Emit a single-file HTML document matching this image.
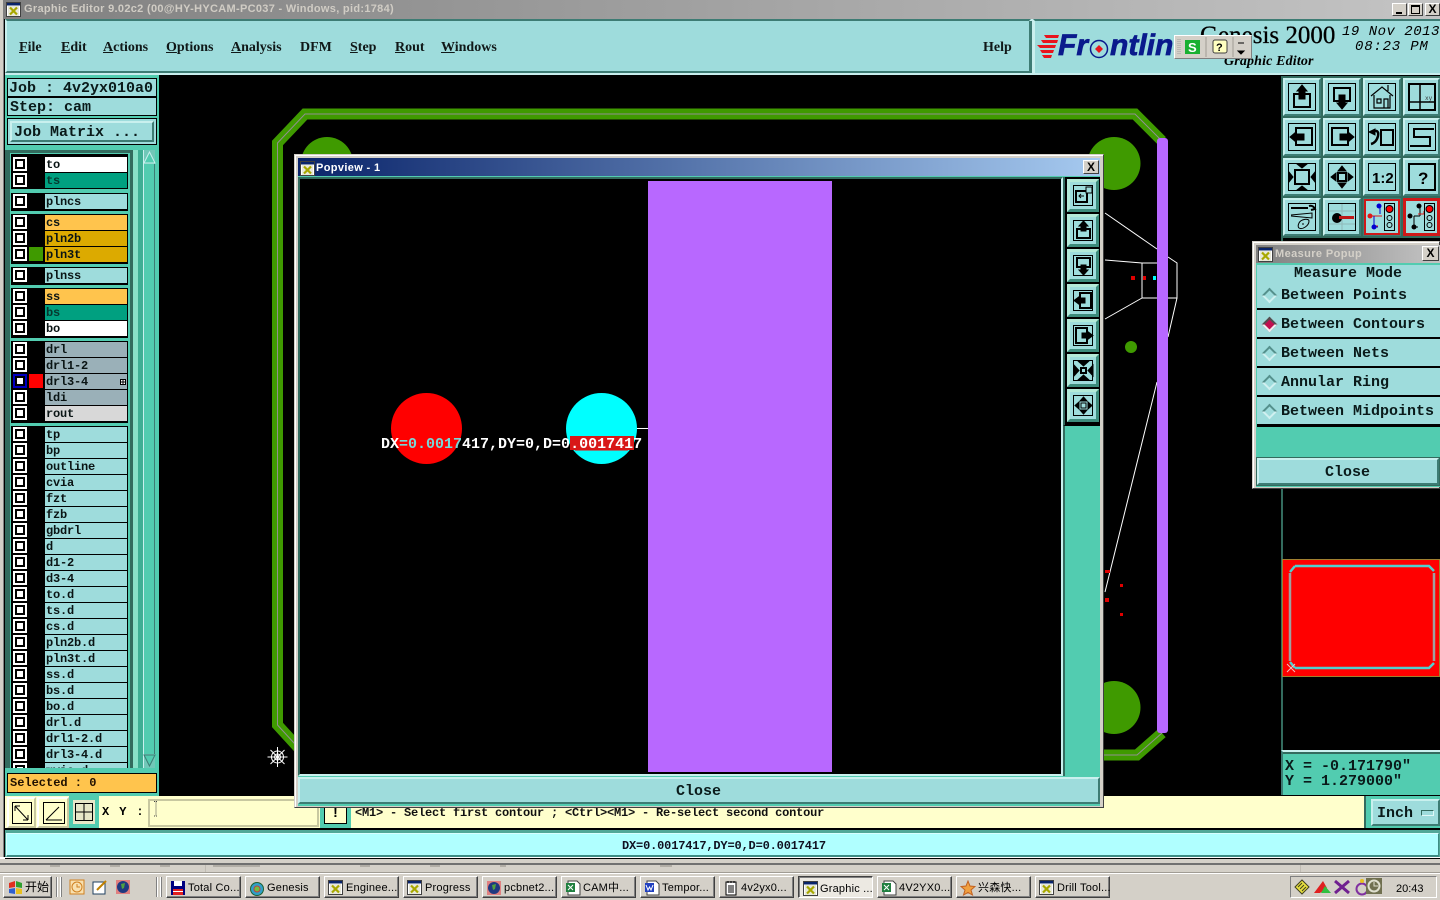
<!DOCTYPE html>
<html><head><meta charset="utf-8"><title>Graphic Editor</title>
<style>
html,body{margin:0;padding:0;width:1440px;height:900px;overflow:hidden;background:#000}
.a{position:absolute;box-sizing:border-box}
.t{position:absolute;white-space:nowrap}
.m{font:bold 15px/18px "Liberation Mono",monospace;color:#0a1a1a}
.s{font:bold 14px/22px "Liberation Serif",serif;color:#101818}
.w{font:11px/14px "Liberation Sans","Noto Sans CJK SC",sans-serif;color:#000}
.g{position:absolute;left:11px;width:117px;background:#000}
.c{position:absolute;left:13px;width:14px;height:14px;background:#000;border:2px solid #fff;box-sizing:border-box}
.c:after{content:"";position:absolute;left:2px;top:2px;width:6px;height:6px;background:#fff}
.l{position:absolute;left:45px;width:82px;height:15px;background:#9edcdc;font:bold 12px/17px "Liberation Mono",monospace;letter-spacing:-.2px;color:#0a1414;padding-left:1px;box-sizing:border-box;white-space:nowrap;overflow:hidden}
.b{position:absolute;box-sizing:border-box;background:#9edcdc;border:2px solid;border-color:#c9f0ee #3d7c74 #3d7c74 #c9f0ee}
.b svg,.p svg{position:absolute;left:0;top:0}
.p{position:absolute;box-sizing:border-box;left:3px;width:32px;height:33px;background:#9edcdc;border:3px solid;border-color:#b4ead8 #3d8c7c #3d8c7c #b4ead8;outline:1px solid #000}
.k{position:absolute;box-sizing:border-box;top:876px;height:22px;width:75px;background:#d4d0c8;border:1px solid;border-color:#fff #404040 #404040 #fff;box-shadow:inset -1px -1px 0 #808080}
.k svg{position:absolute;left:3px;top:3px}
.k span{position:absolute;left:21px;top:4px;font:11px/14px "Liberation Sans","Noto Sans CJK SC",sans-serif;letter-spacing:.2px;color:#000;white-space:nowrap}
.r{position:absolute;left:1257px;width:183px;height:27px;background:#9edcdc}
.d{position:absolute;left:7px;top:9px;width:11px;height:11px;transform:rotate(45deg);background:#9edcdc;border:2px solid;border-color:#55908c #d0f0f0 #d0f0f0 #55908c;box-sizing:border-box}
.r span{position:absolute;left:24px;top:6px;font:bold 15px/18px "Liberation Mono",monospace;color:#0a1a1a;white-space:nowrap}
</style></head>
<body>
<svg width="0" height="0" style="position:absolute"><defs>
<symbol id="xi" viewBox="0 0 15 15"><rect x=".5" y=".5" width="14" height="14" fill="#fff" stroke="#404040"/><rect x="1" y="1" width="13" height="2.5" fill="#0a246a"/><rect x="2" y="4" width="11" height="10" fill="#e8e8d8"/><path d="M4 5.5l7 7M11 5.5l-7 7" stroke="#a8a800" stroke-width="2.2"/></symbol>
</defs></svg>

<!-- base canvas -->
<div class="a" style="left:0;top:0;width:1440px;height:900px;background:#000"></div>
<svg class="a" style="left:0;top:0" width="1440" height="900">
<circle cx="327" cy="163" r="26" fill="#3f9a00"/><circle cx="1114" cy="163.500" r="26.500" fill="#3f9a00"/><circle cx="1114" cy="707.500" r="26.500" fill="#3f9a00"/><circle cx="1131" cy="347" r="6" fill="#3f9a00"/>
<path d="M1162 141L1135 114H305L277.500 143V725L305 755H1137L1162 733" fill="none" stroke="#3f9a00" stroke-width="11"/>
<path d="M1162 141L1135 114H305L277.500 143V725L305 755H1137L1162 733" fill="none" stroke="#909090" stroke-width="1"/>
<g fill="none" stroke="#fff" stroke-width="1"><path d="M1105 213L1157 249M1168 257L1177 263V298H1142V263H1168M1105 260L1142 263M1105 319L1142 298M1177 298L1168 337M1157 382L1105 592"/></g>
<rect x="1157" y="138" width="11" height="595" rx="3" fill="#b868ff"/>
<g fill="#e00000"><rect x="1131" y="276" width="4" height="4"/><rect x="1143" y="276" width="3" height="4"/><rect x="1105" y="570" width="5" height="3"/><rect x="1120" y="584" width="3" height="3"/><rect x="1105" y="598" width="4" height="4"/><rect x="1120" y="613" width="3" height="3"/></g>
<rect x="1153" y="276" width="3" height="4" fill="#0ff"/>
<g stroke="#fff" stroke-width="1" fill="none"><circle cx="277.500" cy="757" r="6"/><circle cx="277.500" cy="757" r="3"/><path d="M277.500 747V767M267.500 757H287.500M270.500 750L284.500 764M284.500 750L270.500 764"/></g>
</svg>

<!-- title bar -->
<div class="a" style="left:0;top:0;width:1440px;height:19px;background:linear-gradient(90deg,#808080,#c4c4c4)"></div>
<svg class="a" style="left:6px;top:2px" width="15" height="15"><use href="#xi"/></svg>
<div class="t" style="left:24px;top:2px;font:bold 11px/14px 'Liberation Sans',sans-serif;letter-spacing:.31px;color:#d0ccc4">Graphic Editor 9.02c2 (00@HY-HYCAM-PC037 - Windows, pid:1784)</div>
<div class="a" style="left:1392px;top:3px;width:15px;height:13px;background:#d4d0c8;border:1px solid;border-color:#fff #404040 #404040 #fff"><div class="a" style="left:3px;top:8px;width:6px;height:2px;background:#000"></div></div>
<div class="a" style="left:1408px;top:3px;width:15px;height:13px;background:#d4d0c8;border:1px solid;border-color:#fff #404040 #404040 #fff"><div class="a" style="left:2px;top:1px;width:9px;height:9px;border:1px solid #000;border-top-width:2px"></div></div>
<div class="a" style="left:1425px;top:3px;width:15px;height:13px;background:#d4d0c8;border:1px solid;border-color:#fff #404040 #404040 #fff;font:bold 12px/11px 'Liberation Sans',sans-serif;text-align:center">X</div>
<div class="a" style="left:0;top:0;width:4px;height:873px;background:#d4d0c8;border-right:1px solid #808080;z-index:0"></div>

<!-- menu bar -->
<div class="a" style="left:5px;top:19px;width:1435px;height:56px;background:#c8eeee"></div>
<div class="a" style="left:5px;top:19px;width:1026px;height:54px;background:#9edcdc;border:2px solid;border-color:#3d7c74 #c9f0ee #3d7c74 #c9f0ee"></div>
<div class="a" style="left:1033px;top:19px;width:407px;height:54px;background:#9edcdc;border-top:2px solid #3d7c74;border-left:2px solid #c9f0ee"></div>
<div class="a" style="left:1029px;top:21px;width:3px;height:52px;background:#3d7c74"></div>
<div class="t s" style="left:19px;top:37px"><u>F</u>ile</div>
<div class="t s" style="left:61px;top:37px"><u>E</u>dit</div>
<div class="t s" style="left:103px;top:37px"><u>A</u>ctions</div>
<div class="t s" style="left:166px;top:37px"><u>O</u>ptions</div>
<div class="t s" style="left:231px;top:37px"><u>A</u>nalysis</div>
<div class="t s" style="left:300px;top:37px">DFM</div>
<div class="t s" style="left:350px;top:37px"><u>S</u>tep</div>
<div class="t s" style="left:395px;top:37px"><u>R</u>out</div>
<div class="t s" style="left:441px;top:37px"><u>W</u>indows</div>
<div class="t s" style="left:983px;top:37px">Help</div>
<svg class="a" style="left:1037px;top:34px" width="72" height="26"><g fill="#e8141c"><path d="M7 1H22L21 4H9z"/><path d="M4 6H21L20 9H6z"/><path d="M0 11H19L18 14H3z"/><path d="M3 16H17L16 19H5z"/><path d="M5 21H15L14 24H7z"/></g><circle cx="62" cy="15" r="8.500" fill="none" stroke="#0a1a8c" stroke-width="1.500"/><path d="M62 11L66 15L62 19L58 15z" fill="#e8141c"/></svg>
<div class="t" style="left:1058px;top:29px;font:italic bold 30px/34px 'Liberation Sans',sans-serif;color:#0a1a8c;-webkit-text-stroke:.7px #0a1a8c">Fr</div>
<div class="t" style="left:1110px;top:29px;font:italic bold 30px/34px 'Liberation Sans',sans-serif;color:#0a1a8c;-webkit-text-stroke:.7px #0a1a8c">ntlin</div>
<div class="t" style="left:1200px;top:21px;font:25px/30px 'Liberation Serif',serif;color:#000;-webkit-text-stroke:.3px #000">Genesis 2000</div>
<div class="t" style="left:1224px;top:54px;font:italic bold 14px/16px 'Liberation Serif',serif;letter-spacing:.15px;color:#000">Graphic Editor</div>
<div class="t" style="left:1342px;top:24px;font:italic 14px/16px 'Liberation Mono',monospace;letter-spacing:.5px;color:#000">19 Nov 2013</div>
<div class="t" style="left:1355px;top:39px;font:italic 14px/16px 'Liberation Mono',monospace;letter-spacing:.8px;color:#000">08:23 PM</div>
<!-- floating ime bar -->
<div class="a" style="left:1174px;top:35px;width:78px;height:24px;background:#d4d0c8;border:1px solid;border-color:#fff #808080 #808080 #fff"></div>
<svg class="a" style="left:1175px;top:36px" width="76" height="22"><path d="M3 3V19M5 3V19" stroke="#a0a0a0" stroke-dasharray="1 1"/><rect x="10" y="4" width="15" height="14" fill="#18b030"/><text x="13" y="16" font-family="Liberation Sans" font-weight="bold" font-size="13" fill="#fff">S</text><path d="M31 1V21M58 1V21" stroke="#a09c94"/><rect x="38" y="4" width="14" height="13" rx="2" fill="#ffffc0" stroke="#404040"/><text x="41" y="15" font-family="Liberation Sans" font-weight="bold" font-size="11" fill="#000">?</text><path d="M63 7H69M63 15H69L66 18z" stroke="#000" fill="#000"/></svg>

<!-- left panel -->
<div class="a" style="left:5px;top:75px;width:154px;height:721px;background:#52ccb0"></div>
<div class="a" style="left:7px;top:78px;width:150px;height:19px;background:#9edcdc;border:1px solid #000"></div>
<div class="a" style="left:7px;top:97px;width:150px;height:19px;background:#9edcdc;border:1px solid #000"></div>
<div class="t m" style="left:9px;top:80px">Job : 4v2yx010a0</div>
<div class="t m" style="left:10px;top:99px">Step: cam</div>
<div class="a" style="left:7px;top:118px;width:150px;height:27px;background:#9edcdc;border:1px solid #000;outline:0"></div>
<div class="a" style="left:10px;top:121px;width:144px;height:21px;background:#9edcdc;border:2px solid;border-color:#c9f0ee #3d7c74 #3d7c74 #c9f0ee"></div>
<div class="t m" style="left:14px;top:124px">Job Matrix ...</div>

<div class="a" style="left:5px;top:150px;width:125px;height:618px;background:#52ccb0;border-left:5px solid #336b5e;border-top:3px solid #336b5e"></div>
<div class="a" style="left:130px;top:150px;width:8px;height:618px;background:#52ccb0;border-left:3px solid #336b5e"></div>
<div class="a" style="left:133px;top:150px;width:5px;height:618px;background:#8ae0c8"></div>
<div class="a" style="left:138px;top:150px;width:5px;height:618px;background:#3fae94"></div>
<div class="a" style="left:143px;top:150px;width:12px;height:618px;background:#52ccb0;border-left:1px solid #c9f0ee;border-right:1px solid #3d7c74"></div>
<div class="a" style="left:155px;top:150px;width:4px;height:618px;background:#52ccb0"></div>
<svg class="a" style="left:143px;top:150px" width="13" height="618"><rect x="1" y="0" width="11" height="14" fill="#70c8b8"/><rect x="1" y="604" width="11" height="14" fill="#70c8b8"/><path d="M6.500 2L12 13H1z" fill="#52ccb0" stroke="#c9f0ee"/><path d="M6.500 616L12 605H1z" fill="#52ccb0" stroke="#3d7c74"/></svg>

<div class="g" style="top:154px;height:35px"></div>
<div class="g" style="top:193px;height:18px"></div>
<div class="g" style="top:214px;height:50px"></div>
<div class="g" style="top:267px;height:18px"></div>
<div class="g" style="top:288px;height:50px"></div>
<div class="g" style="top:341px;height:82px"></div>
<div class="g" style="top:426px;height:342px"></div>

<div class="c" style="top:157px"></div><div class="l" style="top:157px;background:#fff">to</div>
<div class="c" style="top:173px"></div><div class="l" style="top:173px;background:#00a080;color:#06382e">ts</div>
<div class="c" style="top:194px"></div><div class="l" style="top:194px">plncs</div>
<div class="c" style="top:215px"></div><div class="l" style="top:215px;background:#ffc44d">cs</div>
<div class="c" style="top:231px"></div><div class="l" style="top:231px;background:#dcaa00">pln2b</div>
<div class="c" style="top:247px"></div><div class="a" style="left:29px;top:247px;width:14px;height:14px;background:#3f9a00"></div><div class="l" style="top:247px;background:#dcaa00">pln3t</div>
<div class="c" style="top:268px"></div><div class="l" style="top:268px">plnss</div>
<div class="c" style="top:289px"></div><div class="l" style="top:289px;background:#ffc44d">ss</div>
<div class="c" style="top:305px"></div><div class="l" style="top:305px;background:#00a080;color:#06382e">bs</div>
<div class="c" style="top:321px"></div><div class="l" style="top:321px;background:#fff">bo</div>
<div class="c" style="top:342px"></div><div class="l" style="top:342px;background:#9ab0b8">drl</div>
<div class="c" style="top:358px"></div><div class="l" style="top:358px;background:#9ab0b8">drl1-2</div>
<div class="c" style="top:374px;border-color:#0000c0"></div><div class="a" style="left:29px;top:374px;width:14px;height:14px;background:#f00"></div><div class="l" style="top:374px;background:#9ab0b8">drl3-4</div>
<svg class="a" style="left:120px;top:379px" width="6" height="6"><rect x=".5" y=".5" width="5" height="5" fill="#fff" stroke="#000"/><path d="M3 .5V5.500M.5 3H5.500" stroke="#000"/></svg>
<div class="c" style="top:390px"></div><div class="l" style="top:390px;background:#9ab0b8">ldi</div>
<div class="c" style="top:406px"></div><div class="l" style="top:406px;background:#d8d8d8">rout</div>
<div class="c" style="top:427px"></div><div class="l" style="top:427px">tp</div>
<div class="c" style="top:443px"></div><div class="l" style="top:443px">bp</div>
<div class="c" style="top:459px"></div><div class="l" style="top:459px">outline</div>
<div class="c" style="top:475px"></div><div class="l" style="top:475px">cvia</div>
<div class="c" style="top:491px"></div><div class="l" style="top:491px">fzt</div>
<div class="c" style="top:507px"></div><div class="l" style="top:507px">fzb</div>
<div class="c" style="top:523px"></div><div class="l" style="top:523px">gbdrl</div>
<div class="c" style="top:539px"></div><div class="l" style="top:539px">d</div>
<div class="c" style="top:555px"></div><div class="l" style="top:555px">d1-2</div>
<div class="c" style="top:571px"></div><div class="l" style="top:571px">d3-4</div>
<div class="c" style="top:587px"></div><div class="l" style="top:587px">to.d</div>
<div class="c" style="top:603px"></div><div class="l" style="top:603px">ts.d</div>
<div class="c" style="top:619px"></div><div class="l" style="top:619px">cs.d</div>
<div class="c" style="top:635px"></div><div class="l" style="top:635px">pln2b.d</div>
<div class="c" style="top:651px"></div><div class="l" style="top:651px">pln3t.d</div>
<div class="c" style="top:667px"></div><div class="l" style="top:667px">ss.d</div>
<div class="c" style="top:683px"></div><div class="l" style="top:683px">bs.d</div>
<div class="c" style="top:699px"></div><div class="l" style="top:699px">bo.d</div>
<div class="c" style="top:715px"></div><div class="l" style="top:715px">drl.d</div>
<div class="c" style="top:731px"></div><div class="l" style="top:731px">drl1-2.d</div>
<div class="c" style="top:747px"></div><div class="l" style="top:747px">drl3-4.d</div>
<div class="c" style="top:763px"></div><div class="l" style="top:763px">mvia.d</div>
<div class="a" style="left:5px;top:768px;width:154px;height:28px;background:#52ccb0"></div>
<div class="a" style="left:7px;top:773px;width:150px;height:20px;background:#ffc44d;border:1px solid #000"></div>
<div class="t" style="left:10px;top:776px;font:bold 12px/15px 'Liberation Mono',monospace;color:#201000">Selected : 0</div>

<!-- right panel -->
<div class="a" style="left:1281px;top:76px;width:159px;height:162px;background:#336b5e"></div>
<div class="a" style="left:1281px;top:238px;width:2px;height:512px;background:#336b5e"></div>

<div class="b" style="left:1283px;top:78px;width:38px;height:38px"><svg width="34" height="34" fill="none" stroke="#000"><rect x="3.500" y="3.500" width="27" height="27"/><path d="M9 14H25V27H9z" stroke-width="2"/><path d="M17 5L22 11H20V19H14V11H12z" fill="#000"/></svg></div>
<div class="b" style="left:1323px;top:78px;width:38px;height:38px"><svg width="34" height="34" fill="none" stroke="#000"><rect x="3.500" y="3.500" width="27" height="27"/><path d="M9 8H25V21H9z" stroke-width="2"/><path d="M17 29L22 23H20V15H14V23H12z" fill="#000"/></svg></div>
<div class="b" style="left:1363px;top:78px;width:38px;height:38px"><svg width="34" height="34" fill="none" stroke="#000"><rect x="3.500" y="3.500" width="27" height="27"/><path d="M6 16L17 7L28 16M9 15V28H25V15M12 19H16V23H12zM19 19H23V28H19zM23 11V5" stroke-width="1.200"/></svg></div>
<div class="b" style="left:1403px;top:78px;width:37px;height:38px"><svg width="34" height="34" fill="none" stroke="#000"><rect x="4" y="4" width="26" height="26" stroke-width="2"/><path d="M15 4V30M4 22H30" stroke-width="1.500"/><text x="20" y="20" font-family="Liberation Mono" font-size="6" fill="#333" stroke="none">xy</text></svg></div>

<div class="b" style="left:1283px;top:118px;width:38px;height:38px"><svg width="34" height="34" fill="none" stroke="#000"><rect x="3.500" y="3.500" width="27" height="27"/><path d="M11 8H27V25H11z" stroke-width="2"/><path d="M5 17L11 12V14H19V20H11V22z" fill="#000"/></svg></div>
<div class="b" style="left:1323px;top:118px;width:38px;height:38px"><svg width="34" height="34" fill="none" stroke="#000"><rect x="3.500" y="3.500" width="27" height="27"/><path d="M7 8H23V25H7z" stroke-width="2"/><path d="M29 17L23 12V14H15V20H23V22z" fill="#000"/></svg></div>
<div class="b" style="left:1363px;top:118px;width:38px;height:38px"><svg width="34" height="34" fill="none" stroke="#000"><rect x="3.500" y="3.500" width="27" height="27"/><path d="M16 10H28V25H16z" stroke-width="2"/><path d="M7 13C11 9 14 11 13 16C12 20 10 23 6 24" stroke-width="2.500"/><path d="M4 12L10 9V15z" fill="#000"/></svg></div>
<div class="b" style="left:1403px;top:118px;width:37px;height:38px"><svg width="34" height="34" fill="none" stroke="#000"><rect x="3.500" y="3.500" width="27" height="27"/><path d="M29 9H9V17H25V26H5" stroke-width="2"/></svg></div>

<div class="b" style="left:1283px;top:158px;width:38px;height:38px"><svg width="34" height="34" fill="none" stroke="#000"><rect x="3.500" y="3.500" width="27" height="27"/><rect x="10" y="10" width="14" height="14" stroke-width="2"/><path d="M12 4H22L17 8zM12 30H22L17 26zM4 12V22L8 17zM30 12V22L26 17z" fill="#000"/></svg></div>
<div class="b" style="left:1323px;top:158px;width:38px;height:38px"><svg width="34" height="34" fill="none" stroke="#000"><rect x="3.500" y="3.500" width="27" height="27"/><rect x="13" y="13" width="8" height="8" stroke-width="2"/><path d="M17 6L21 11H13zM17 28L21 23H13zM6 17L11 13V21zM28 17L23 13V21z" fill="#000"/></svg></div>
<div class="b" style="left:1363px;top:158px;width:38px;height:38px"><svg width="34" height="34" fill="none" stroke="#000"><rect x="3.500" y="3.500" width="27" height="27"/><text x="7" y="23" font-family="Liberation Sans" font-weight="bold" font-size="15" fill="#000" stroke="none">1:2</text></svg></div>
<div class="b" style="left:1403px;top:158px;width:37px;height:38px"><svg width="34" height="34" fill="none" stroke="#000"><rect x="4" y="4" width="26" height="26" stroke-width="2"/><text x="13" y="24" font-family="Liberation Sans" font-weight="bold" font-size="17" fill="#000" stroke="none">?</text></svg></div>

<div class="b" style="left:1283px;top:198px;width:38px;height:38px"><svg width="34" height="34" fill="none" stroke="#000"><rect x="3.500" y="3.500" width="27" height="27"/><path d="M6 8H23M24 6C27 5 29 7 30 9L26 10" stroke-width="2"/><path d="M6 15L27 13V18L6 16" stroke-width="1"/><path d="M14 23C16 19 24 18 24 21C24 26 17 30 14 28C13 27 13 25 14 23z M17 24H19" stroke-width="1"/></svg></div>
<div class="b" style="left:1323px;top:198px;width:38px;height:38px"><svg width="34" height="34" fill="none" stroke="#000"><rect x="3.500" y="3.500" width="27" height="27"/><path d="M17 4V30M4 11H30M4 24H30" stroke="#8fb8b8"/><circle cx="12" cy="18" r="5" fill="#000" stroke="none"/><rect x="14" y="16" width="15" height="3" fill="#c01818" stroke="none"/></svg></div>
<div class="b" style="left:1363px;top:198px;width:38px;height:38px;border-color:#d01818;border-width:3px;outline:1px solid #3d7c74;outline-offset:-1px"><svg width="32" height="32" fill="none"><path d="M3 15H8M8 25V15M8 15H16M14 5V13M8 25H12" stroke="#e01818" stroke-width="1"/><path d="M14 5V13M8 15V26H12" stroke="#0000d0"/><circle cx="13" cy="5" r="2.500" fill="#0000d0"/><circle cx="4" cy="15" r="2.500" fill="#e01818"/><circle cx="8" cy="26" r="2.500" fill="#0000d0"/><rect x="18.500" y="2.500" width="10" height="27" stroke="#000"/><circle cx="23.500" cy="8" r="3.500" fill="#f00" stroke="#000"/><circle cx="23.500" cy="17" r="2.500" stroke="#000"/><circle cx="23.500" cy="24" r="2.500" stroke="#000"/></svg></div>
<div class="b" style="left:1403px;top:198px;width:37px;height:38px;border-color:#d01818;border-width:3px"><svg width="32" height="32" fill="none"><path d="M14 5V13M8 15V26H12M8 15H14M14 13V15" stroke="#000"/><path d="M12 13H18V10" stroke="#e01818"/><circle cx="13" cy="5" r="2.500" fill="#000"/><circle cx="4" cy="15" r="2.500" fill="#000"/><circle cx="8" cy="26" r="2.500" fill="#000"/><rect x="18.500" y="2.500" width="10" height="27" stroke="#000"/><circle cx="23.500" cy="8" r="3.500" fill="#f00" stroke="#000"/><circle cx="23.500" cy="17" r="2.500" stroke="#000"/><circle cx="23.500" cy="24" r="2.500" stroke="#000"/></svg></div>

<!-- preview -->
<div class="a" style="left:1282px;top:559px;width:158px;height:118px;background:#f00;border:1px solid #a08030"></div>
<svg class="a" style="left:1282px;top:559px" width="158" height="118" fill="none"><path d="M8 14V102M152 14V102" stroke="#a0a0a0" stroke-width="2.500"/><path d="M13 7H147L152 12M13 109H147L152 104M8 13L13 7M8 103L13 109" stroke="#50d0d0" stroke-width="2.500"/><path d="M5 105L13 113M13 105L5 113" stroke="#f0c0c0"/></svg>

<!-- coords -->
<div class="a" style="left:1281px;top:750px;width:159px;height:45px;background:#52ccb0;border-top:2px solid #c9f0ee;border-left:2px solid #3d7c74"></div>
<div class="a" style="left:1283px;top:752px;width:157px;height:2px;background:#336b5e"></div>
<div class="t m" style="left:1285px;top:758px">X = -0.171790"</div>
<div class="t m" style="left:1285px;top:773px">Y = 1.279000"</div>

<!-- bottom prompt bar -->
<div class="a" style="left:5px;top:796px;width:1435px;height:32px;background:#ffffcc"></div>
<div class="a" style="left:7px;top:797px;width:29px;height:31px;background:#ffffcc;border:2px solid;border-color:#fff #c8c8a0 #c8c8a0 #fff"><svg class="a" style="left:3px;top:3px" width="20" height="22" fill="none" stroke="#000"><rect x=".5" y=".5" width="19" height="21"/><path d="M3 4L16 18M3 4V9M3 4H8M16 18V13M16 18H11"/></svg></div>
<div class="a" style="left:37px;top:797px;width:32px;height:31px;background:#ffffcc;border:2px solid;border-color:#fff #c8c8a0 #c8c8a0 #fff"><svg class="a" style="left:4px;top:3px" width="22" height="22" fill="none" stroke="#000"><rect x=".5" y=".5" width="21" height="21"/><path d="M3 18L16 5M3 18H19"/></svg></div>
<div class="a" style="left:69px;top:796px;width:30px;height:32px;background:#52ccb0;padding:4px"><div style="width:22px;height:24px;background:#e8e8c8;position:relative"><svg class="a" style="left:2px;top:3px" width="18" height="18" fill="none" stroke="#000"><rect x=".5" y=".5" width="17" height="17"/><path d="M9 .5V17.500M.5 9H17.500"/></svg></div></div>
<div class="t" style="left:102px;top:805px;font:bold 12px/15px 'Liberation Mono',monospace;letter-spacing:1.400px;color:#000">X Y :</div>
<div class="a" style="left:148px;top:799px;width:171px;height:28px;background:#ffffcc;border:2px solid;border-color:#c8c8a0 #c8c8a0 #c8c8a0 #c8c8a0"></div>
<svg class="a" style="left:153px;top:801px" width="6" height="16" stroke="#444" fill="none"><path d="M1 .5H5M3 .5V15M1 15H5" stroke-dasharray="1 1"/></svg>
<div class="a" style="left:320px;top:797px;width:31px;height:31px;background:#52ccb0;padding:4px"><div style="width:23px;height:23px;background:#ffffcc;border:1px solid #000;box-sizing:border-box;font:bold 14px/20px 'Liberation Sans',sans-serif;text-align:center">!</div></div>
<div class="t" style="left:355px;top:806px;font:bold 12px/15px 'Liberation Mono',monospace;letter-spacing:-.2px;color:#101010">&lt;M1&gt; - Select first contour ; &lt;Ctrl&gt;&lt;M1&gt; - Re-select second contour</div>
<div class="a" style="left:1364px;top:796px;width:76px;height:32px;background:#52ccb0;border-left:2px solid #336b5e"></div>
<div class="b" style="left:1371px;top:799px;width:69px;height:27px"><div class="t m" style="left:4px;top:4px">Inch</div><div class="a" style="left:48px;top:9px;width:13px;height:6px;background:#9edcdc;border:1px solid;border-color:#336b5e #e0f8f8 #e0f8f8 #336b5e"></div></div>
<div class="a" style="left:5px;top:828px;width:1435px;height:2px;background:#000"></div>
<div class="a" style="left:5px;top:830px;width:1435px;height:28px;background:#52a898"></div>
<div class="a" style="left:6px;top:833px;width:1433px;height:24px;background:#b0ffff;border:1px solid;border-top-color:#d8ffff;border-left-color:#d8ffff;border-bottom:2px solid #3d8c84;border-right-color:#3d8c84"></div>
<div class="t" style="left:622px;top:839px;font:bold 12px/15px 'Liberation Mono',monospace;letter-spacing:-.17px;color:#101020">DX=0.0017417,DY=0,D=0.0017417</div>
<div class="a" style="left:0;top:857px;width:1440px;height:2px;background:#fff"></div>
<div class="a" style="left:5px;top:858px;width:1435px;height:1px;background:#000"></div>

<!-- sliver behind -->
<div class="a" style="left:0;top:859px;width:1440px;height:14px;background:#d4d0c8;border-top:1px solid #d4d0c8;border-bottom:1px solid #a09c94"></div>
<div class="a" style="left:0;top:863px;width:1440px;height:2px;background:#707070"></div>
<div class="a" style="left:205px;top:865px;width:1px;height:7px;background:#c0bcb4"></div>
<div class="a" style="left:1300px;top:865px;width:1px;height:7px;background:#c0bcb4"></div>
<svg class="a" style="left:0;top:865px" width="1440" height="8" stroke="#908c84"><path d="M50 1H60M110 1H120M160 1H170M213 1H260M360 1H370M430 1H440M500 1H506M660 1H672" stroke-width="1"/></svg>

<!-- taskbar -->
<div class="a" style="left:0;top:873px;width:1440px;height:27px;background:#d4d0c8;border-top:1px solid #fff"></div>
<div class="k" style="left:3px;width:49px"><svg width="16" height="16"><path d="M2 3L8 1V7L2 8z" fill="#e03020"/><path d="M9 1L15 3V8L9 7z" fill="#30a030"/><path d="M2 9L8 8V14L2 13z" fill="#3060d0"/><path d="M9 8L15 9V14L9 14z" fill="#e8c020"/></svg><span style="font-size:12px;top:3px;letter-spacing:0">开始</span></div>
<div class="a" style="left:56px;top:877px;width:2px;height:20px;border-left:1px solid #808080;border-right:1px solid #fff"></div>
<div class="a" style="left:60px;top:877px;width:2px;height:20px;border-left:1px solid #fff;border-right:1px solid #808080"></div>
<svg class="a" style="left:68px;top:877px" width="80" height="20"><rect x="2" y="3" width="14" height="14" fill="#f8e0b0" stroke="#d08020"/><circle cx="9" cy="10" r="5" fill="none" stroke="#d08020"/><path d="M9 7V10H12" stroke="#d08020" fill="none"/><rect x="25" y="5" width="12" height="12" fill="#fff" stroke="#204060"/><path d="M29 13L38 4" stroke="#c08000" stroke-width="2"/><rect x="48" y="3" width="14" height="14" fill="#e08080"/><circle cx="55" cy="10" r="6" fill="#203880"/><path d="M53 7L57 6L56 11L54 12z" fill="#50a040"/></svg>
<div class="a" style="left:156px;top:877px;width:2px;height:20px;border-left:1px solid #808080;border-right:1px solid #fff"></div>
<div class="a" style="left:160px;top:877px;width:2px;height:20px;border-left:1px solid #fff;border-right:1px solid #808080"></div>

<div class="k" style="left:166px"><svg width="16" height="16"><rect x="1" y="1" width="14" height="14" fill="#000080"/><rect x="4" y="1" width="8" height="5" fill="#fff"/><rect x="3" y="9" width="10" height="6" fill="#e02020"/><rect x="3" y="11" width="10" height="1" fill="#fff"/></svg><span>Total Co...</span></div>
<div class="k" style="left:245px"><svg width="16" height="16"><circle cx="8" cy="9" r="6.500" fill="#30a0c8" stroke="#206030"/><circle cx="8" cy="9" r="3" fill="#70c040" stroke="#c04040"/></svg><span>Genesis</span></div>
<div class="k" style="left:324px"><svg width="15" height="15"><use href="#xi"/></svg><span>Enginee...</span></div>
<div class="k" style="left:403px"><svg width="15" height="15"><use href="#xi"/></svg><span>Progress</span></div>
<div class="k" style="left:482px"><svg width="16" height="16"><rect x="1" y="1" width="14" height="14" fill="#e08080"/><circle cx="8" cy="8" r="6" fill="#203880"/><path d="M6 5L10 4L9 9L7 10z" fill="#50a040"/></svg><span>pcbnet2...</span></div>
<div class="k" style="left:561px"><svg width="16" height="16"><path d="M3 1H12L15 4V15H3z" fill="#fff" stroke="#404040"/><rect x="1" y="3" width="9" height="9" fill="#208040"/><path d="M3 5L8 10M8 5L3 10" stroke="#fff"/></svg><span>CAM中...</span></div>
<div class="k" style="left:640px"><svg width="16" height="16"><path d="M3 1H12L15 4V15H3z" fill="#fff" stroke="#404040"/><rect x="1" y="3" width="9" height="9" fill="#2040c0"/><path d="M2 5L4 10L5.500 7L7 10L9 5" stroke="#fff" fill="none"/></svg><span>Tempor...</span></div>
<div class="k" style="left:719px"><svg width="16" height="16"><rect x="3" y="2" width="10" height="13" fill="#fff" stroke="#000"/><path d="M5 1V3M8 1V3M11 1V3M5 6H11M5 8H11M5 10H11M5 12H11" stroke="#000"/></svg><span>4v2yx0...</span></div>
<div class="k" style="left:798px;background:#ece9e2;border-color:#404040 #fff #fff #404040;box-shadow:inset 1px 1px 0 #808080"><svg width="15" height="15" style="top:4px;left:4px"><use href="#xi"/></svg><span style="top:5px">Graphic ...</span></div>
<div class="k" style="left:877px"><svg width="16" height="16"><path d="M3 1H12L15 4V15H3z" fill="#fff" stroke="#404040"/><rect x="1" y="3" width="9" height="9" fill="#208040"/><path d="M3 5L8 10M8 5L3 10" stroke="#fff"/></svg><span>4V2YX0...</span></div>
<div class="k" style="left:956px"><svg width="16" height="16"><path d="M8 1L10 6L15 6.500L11 10L12.500 15L8 12.500L3.500 15L5 10L1 6.500L6 6z" fill="#f0a040" stroke="#c06020"/></svg><span>兴森快...</span></div>
<div class="k" style="left:1035px"><svg width="15" height="15"><use href="#xi"/></svg><span>Drill Tool...</span></div>

<div class="a" style="left:1290px;top:876px;width:147px;height:22px;border:1px solid;border-color:#808080 #fff #fff #808080"></div>
<svg class="a" style="left:1293px;top:878px" width="85" height="18"><path d="M2 9L9 2L16 9L9 16z" fill="#e8e040" stroke="#404020"/><path d="M5 9L9 5M7 11L11 7M9 13L13 9" stroke="#404020"/><path d="M21 15L30 3L34 10L27 15z" fill="#e02020"/><path d="M32 8L38 15H28z" fill="#30c040"/><path d="M42 3L56 15M56 3L42 15" stroke="#702090" stroke-width="3"/><circle cx="69" cy="11" r="5.500" fill="none" stroke="#8030a0" stroke-width="2"/><circle cx="69" cy="3" r="2" fill="#e8c020"/></svg>
<svg class="a" style="left:1366px;top:878px" width="16" height="16"><rect width="16" height="16" fill="#707050"/><circle cx="8" cy="8" r="5.500" fill="none" stroke="#e0e0d0" stroke-width="2"/><path d="M8 4V8H12" stroke="#e0e0d0" fill="none"/></svg>
<div class="t w" style="left:1396px;top:882px;font-size:11px">20:43</div>

<!-- popview -->
<div class="a" style="left:294px;top:154px;width:810px;height:654px;background:#d4d0c8;border:1px solid;border-color:#d4d0c8 #404040 #404040 #d4d0c8;box-shadow:inset 1px 1px 0 #fff;z-index:5">
  <div class="a" style="left:3px;top:3px;width:802px;height:19px;background:linear-gradient(90deg,#0a246a,#a6caf0)"></div>
  <svg class="a" style="left:5px;top:6px" width="15" height="15"><use href="#xi"/></svg>
  <div class="t" style="left:21px;top:6px;font:bold 11px/14px 'Liberation Sans',sans-serif;letter-spacing:.36px;color:#fff">Popview - 1</div>
  <div class="a" style="left:788px;top:5px;width:16px;height:14px;background:#d4d0c8;border:1px solid;border-color:#fff #404040 #404040 #fff;font:bold 12px/12px 'Liberation Sans',sans-serif;text-align:center">X</div>
  <div class="a" style="left:3px;top:21px;width:802px;height:630px;background:#52ccb0"></div>
  <div class="a" style="left:3px;top:22px;width:765px;height:599px;background:#000;border:2px solid;border-color:#336b5e #c9f0ee #c9f0ee #336b5e"></div>
  <div class="a" style="left:768px;top:22px;width:37px;height:599px;background:#000;border-left:2px solid #336b5e"></div>
  <div class="a" style="left:768px;top:270px;width:37px;height:351px;background:#52ccb0;border-left:2px solid #336b5e;border-top:1px solid #000"></div>
  <div class="a" style="left:353px;top:26px;width:184px;height:591px;background:#b868ff"></div>
  <div class="a" style="left:96px;top:238px;width:71px;height:71px;border-radius:50%;background:#f00"></div>
  <div class="a" style="left:271px;top:238px;width:71px;height:71px;border-radius:50%;background:#0ff"></div>
  <div class="a" style="left:275px;top:281px;width:64px;height:14px;background:#d81818"></div>
  <div class="a" style="left:280px;top:295px;width:53px;height:1px;background:#808080"></div>
  <div class="a" style="left:342px;top:273px;width:11px;height:1px;background:#fff"></div>
  <div class="t" style="left:86px;top:281px;font:bold 15px/17px 'Liberation Mono',monospace;color:#fff">DX<span style="color:#78d8d8">=0.0017</span>417,DY=0,D=0<span style="color:#fff">.0017417</span></div>

  <div class="p" style="left:772px;top:24px"><svg width="26" height="27" fill="none" stroke="#000"><rect x="3.500" y="3.500" width="19" height="20" stroke-width="1"/><rect x="6" y="9" width="11" height="11" stroke-width="2"/><rect x="16" y="5" width="6" height="6" fill="#9edcdc"/><path d="M14 14H9M11 12L9 14L11 16"/></svg></div>
  <div class="p" style="left:772px;top:59px"><svg width="26" height="27" fill="none" stroke="#000"><rect x="3.500" y="3.500" width="19" height="20"/><path d="M7 12H20V21H7z" stroke-width="2"/><path d="M13.500 4L18 9H16V14H11V9H9z" fill="#000"/></svg></div>
  <div class="p" style="left:772px;top:94px"><svg width="26" height="27" fill="none" stroke="#000"><rect x="3.500" y="3.500" width="19" height="20"/><path d="M7 6H20V15H7z" stroke-width="2"/><path d="M13.500 23L18 18H16V13H11V18H9z" fill="#000"/></svg></div>
  <div class="p" style="left:772px;top:129px"><svg width="26" height="27" fill="none" stroke="#000"><rect x="3.500" y="3.500" width="19" height="20"/><path d="M10 6H21V21H10z" stroke-width="2"/><path d="M4 13.500L10 9V11H15V16H10V18z" fill="#000"/></svg></div>
  <div class="p" style="left:772px;top:164px"><svg width="26" height="27" fill="none" stroke="#000"><rect x="3.500" y="3.500" width="19" height="20"/><path d="M6 6H17V21H6z" stroke-width="2"/><path d="M23 13.500L17 9V11H12V16H17V18z" fill="#000"/></svg></div>
  <div class="p" style="left:772px;top:199px"><svg width="26" height="27" fill="none" stroke="#000"><rect x="3.500" y="3.500" width="19" height="20"/><rect x="11" y="11" width="5" height="5" stroke-width="2"/><path d="M8 4H19L13.500 9zM8 23H19L13.500 18zM4 8V19L9 13.500zM23 8V19L18 13.500z" fill="#000"/></svg></div>
  <div class="p" style="left:772px;top:234px"><svg width="26" height="27" fill="none" stroke="#000"><rect x="3.500" y="3.500" width="19" height="20"/><rect x="11" y="11" width="5" height="5"/><path d="M13.500 5L17 9H10zM13.500 22L17 18H10zM5 13.500L9 10V17zM22 13.500L18 10V17z" fill="#000"/></svg></div>

  <div class="a" style="left:3px;top:622px;width:802px;height:27px;background:#9edcdc;border:2px solid;border-color:#c9f0ee #3d7c74 #3d7c74 #c9f0ee"></div>
  <div class="t m" style="left:381px;top:628px">Close</div>
</div>

<!-- measure popup -->
<div class="a" style="left:1252px;top:241px;width:188px;height:248px;background:#d4d0c8;border:1px solid;border-color:#d4d0c8 #404040 #404040 #d4d0c8;box-shadow:inset 1px 1px 0 #fff;z-index:6">
  <div class="a" style="left:3px;top:3px;width:184px;height:18px;background:linear-gradient(90deg,#808080,#c4c4c4)"></div>
  <svg class="a" style="left:5px;top:5px" width="15" height="15"><use href="#xi"/></svg>
  <div class="t" style="left:22px;top:5px;font:bold 11px/14px 'Liberation Sans',sans-serif;letter-spacing:.4px;color:#d4d0c8">Measure Popup</div>
  <div class="a" style="left:169px;top:4px;width:17px;height:15px;background:#d4d0c8;border:1px solid;border-color:#fff #404040 #404040 #fff;font:bold 12px/13px 'Liberation Sans',sans-serif;text-align:center">X</div>
  <div class="a" style="left:3px;top:21px;width:184px;height:224px;background:#52ccb0"></div>
  <div class="a" style="left:4px;top:23px;width:183px;height:162px;background:#000"></div>
  <div class="a" style="left:4px;top:23px;width:183px;height:16px;background:#9edcdc"></div>
  <div class="t m" style="left:41px;top:23px">Measure Mode</div>
</div>
<div class="r" style="top:281px;z-index:7"><i class="d"></i><span>Between Points</span></div>
<div class="r" style="top:310px;z-index:7"><i class="d" style="background:#c01050;border-color:#505050 #f0f0f0 #f0f0f0 #505050"></i><span>Between Contours</span></div>
<div class="r" style="top:339px;z-index:7"><i class="d"></i><span>Between Nets</span></div>
<div class="r" style="top:368px;z-index:7"><i class="d"></i><span>Annular Ring</span></div>
<div class="r" style="top:397px;z-index:7"><i class="d"></i><span>Between Midpoints</span></div>
<div class="a" style="left:1256px;top:457px;width:184px;height:29px;background:#9edcdc;border:3px solid;border-color:#c9f0ee #3d7c74 #3d7c74 #c9f0ee;outline:1px solid #336b5e;outline-offset:-1px;z-index:7"></div>
<div class="t m" style="left:1325px;top:464px;z-index:8">Close</div>
</body></html>
